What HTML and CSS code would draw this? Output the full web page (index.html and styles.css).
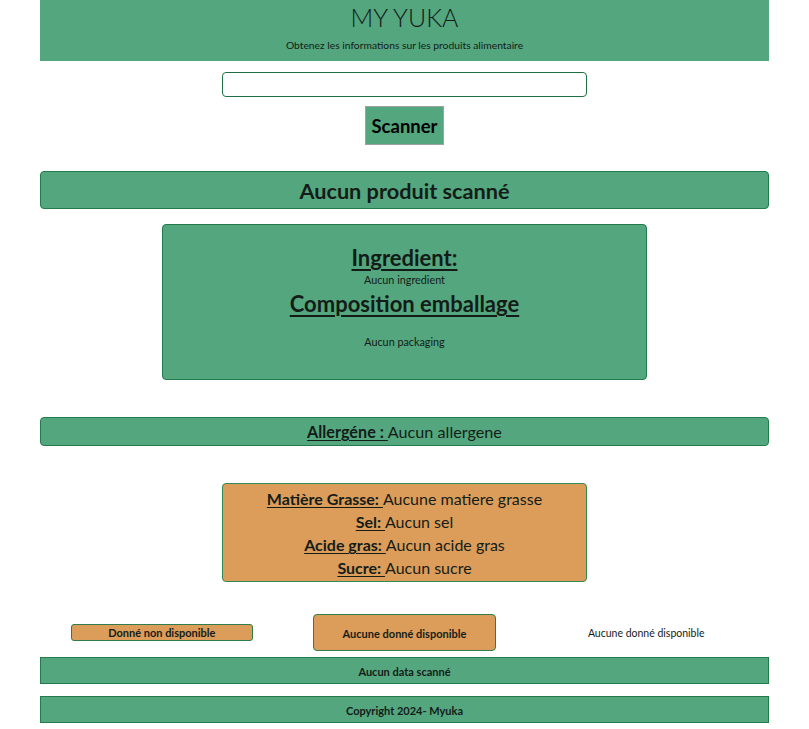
FILE: index.html
```html
<!DOCTYPE html>
<html lang="fr">
<head>
<meta charset="utf-8">
<title>MY YUKA</title>
<link rel="stylesheet" href="styles.css">
</head>
<body>
<header class="header">
  <h1 class="title">MY YUKA</h1>
  <p class="subtitle">Obtenez les informations sur les produits alimentaire</p>
</header>
<main class="main">
  <input class="search" type="text">
  <button class="scan-btn">Scanner</button>
  <div class="bar product-bar">Aucun produit scanné</div>
  <section class="ingredients">
    <h2 class="ing-title">Ingredient:</h2>
    <p class="ing-text">Aucun ingredient</p>
    <h2 class="ing-title">Composition emballage</h2>
    <p class="ing-text pack">Aucun packaging</p>
  </section>
  <div class="bar allergen-bar"><span class="label">Allergéne : </span>Aucun allergene</div>
  <section class="nutri">
    <p><span class="label">Matière Grasse: </span>Aucune matiere grasse</p>
    <p><span class="label">Sel: </span>Aucun sel</p>
    <p><span class="label">Acide gras: </span>Aucun acide gras</p>
    <p><span class="label">Sucre: </span>Aucun sucre</p>
  </section>
  <div class="legend">
    <div class="legend-col"><div class="chip small">Donné non disponible</div></div>
    <div class="legend-col"><div class="chip big">Aucune donné disponible</div></div>
    <div class="legend-col"><div class="plain">Aucune donné disponible</div></div>
  </div>
  <div class="flat-bar data-bar">Aucun data scanné</div>
</main>
<footer class="flat-bar footer">Copyright 2024- Myuka</footer>
</body>
</html>
```
FILE: styles.css
```css
* { box-sizing: border-box; }
body {
  margin: 0;
  font-family: Lato, "Open Sans", sans-serif;
  color: #141c18;
  background: #fff;
}
.header {
  width: 90%;
  margin: 0 auto;
  height: 61px;
  background: #53a67e;
  text-align: center;
  padding-top: 2px;
}
.title {
  margin: 0;
  font-size: 25px;
  font-weight: 300;
  line-height: 30px;
}
.subtitle {
  margin: 6px 0 0;
  font-size: 10.3px;
  line-height: 14px;
}
.main {
  display: flex;
  flex-direction: column;
  align-items: center;
}
.search {
  margin-top: 11px;
  width: 45%;
  height: 25px;
  border: 1px solid #1f6f44;
  border-radius: 4px;
  background: #fff;
}
.scan-btn {
  margin-top: 9px;
  width: 79px;
  height: 39px;
  background: #53a67e;
  border: 1px solid #9aa49f;
  font-family: Lato, "Open Sans", sans-serif;
  font-weight: 700;
  font-size: 18.5px;
  color: #000;
  padding: 0;
}
.bar {
  width: 90%;
  background: #53a67e;
  border: 1px solid #237a4a;
  border-radius: 4px;
  text-align: center;
}
.product-bar {
  margin-top: 26px;
  height: 38px;
  line-height: 38px;
  font-size: 21.7px;
  font-weight: 700;
}
.ingredients {
  margin-top: 15px;
  width: 60%;
  height: 156px;
  background: #53a67e;
  border: 1px solid #237a4a;
  border-radius: 4px;
  text-align: center;
  padding-top: 20px;
}
.ing-title {
  margin: 0;
  font-size: 22px;
  font-weight: 700;
  line-height: 26px;
  text-decoration: underline;
  text-underline-offset: 3px;
  text-decoration-thickness: 1.5px;
}
.ing-text {
  margin: 2px 0 4px;
  font-size: 10.8px;
  line-height: 14px;
}
.ing-text.pack { margin-top: 18px; }
.allergen-bar {
  margin-top: 37px;
  height: 29px;
  line-height: 27px;
  font-size: 16.2px;
}
.label {
  font-weight: 700;
  text-decoration: underline;
  text-underline-offset: 2px;
}
.nutri {
  margin-top: 37px;
  width: 45%;
  height: 99px;
  background: #dc9d5a;
  border: 1px solid #2f8a55;
  border-radius: 4px;
  text-align: center;
  padding-top: 3px;
  font-size: 16px;
}
.nutri p {
  margin: 0;
  line-height: 23px;
}
.legend {
  margin-top: 32px;
  width: 90%;
  display: grid;
  grid-template-columns: repeat(3, 1fr);
  align-items: center;
}
.legend-col {
  display: flex;
  justify-content: center;
}
.chip {
  width: 75%;
  background: #dc9d5a;
  border: 1px solid #2f7d4c;
  border-radius: 3px;
  text-align: center;
  font-size: 11px;
  font-weight: 700;
}
.chip.small { height: 17px; line-height: 16px; }
.chip.big { height: 37px; line-height: 37px; border-radius: 4px; }
.plain {
  font-size: 10.5px;
  text-align: center;
  padding-right: 2px;
}
.flat-bar {
  width: 90%;
  height: 27px;
  line-height: 27px;
  background: #53a67e;
  border: 1px solid #237a4a;
  text-align: center;
  font-size: 11px;
  font-weight: 700;
}
.data-bar { margin-top: 6px; }
.footer { margin: 12px auto 0; }
```
